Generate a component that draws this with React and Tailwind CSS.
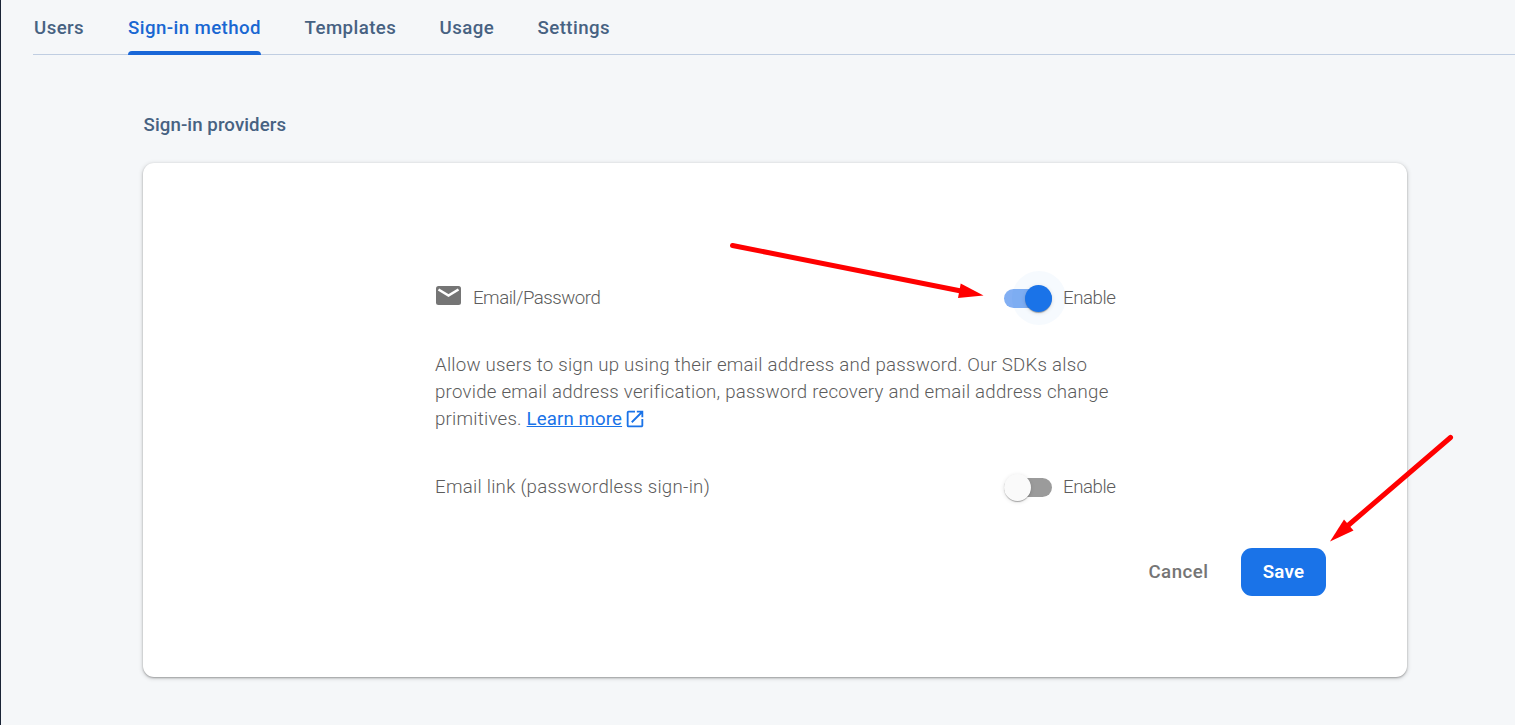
import React from "react";

const TABS = [
  { label: "Users", width: "w-[52px]", inset: "pl-px" },
  { label: "Sign-in method", width: "w-[133px]", active: true },
  { label: "Templates", width: "w-[92px]", inset: "pl-[0.6px]" },
  { label: "Usage", width: "w-[55px]", inset: "pl-[0.6px]" },
  { label: "Settings", width: "w-[73px]", inset: "pl-[0.6px]" },
];

function Tabs() {
  return (
    <nav className="ml-8 flex h-[55px] gap-[43px] border-b border-[#c0cee2]">
      {TABS.map((tab) => (
        <a
          key={tab.label}
          className={
            "relative flex h-[54px] items-center whitespace-nowrap pt-0.5 text-[18.67px] font-medium tracking-[0.42px] " +
            tab.width +
            (tab.active ? " text-[#1967d2]" : " text-[#476282] " + tab.inset)
          }
        >
          <span>{tab.label}</span>
          {tab.active && (
            <span className="absolute -bottom-px left-0 h-1 w-full rounded-t-[4px] bg-[#1967d8]" />
          )}
        </a>
      ))}
    </nav>
  );
}

function Toggle({ on }) {
  return (
    <div className="flex items-center pt-0.5">
      <div
        className={
          "relative h-[19px] w-12 rounded-full " + (on ? "bg-[#82aff3]" : "bg-[#9b9b9b]")
        }
      >
        {on && (
          <span className="absolute -top-[18px] left-[8px] size-[54px] rounded-full bg-[#1a73e8]/4" />
        )}
        <span
          className={
            "absolute -top-1 size-[27px] rounded-full shadow-[0_2px_1px_-1px_rgba(0,0,0,0.2),0_1px_1px_rgba(0,0,0,0.14),0_1px_4px_rgba(0,0,0,0.12)] " +
            (on ? "left-[21px] bg-[#1a73e8]" : "left-0 bg-[#fafafa]")
          }
        />
      </div>
      <span className="relative ml-[11px] w-[53px] text-[18.67px] leading-[27px] tracking-[-0.45px]">
        Enable
      </span>
    </div>
  );
}

function Arrows() {
  return (
    <svg
      className="pointer-events-none absolute top-0 -left-px"
      width="1515"
      height="725"
      viewBox="0 0 1515 725"
      fill="#ff0000"
      stroke="#ff0000"
    >
      <path d="M732.5 245.5L961 291" strokeWidth="5" strokeLinecap="round" />
      <path d="M983.5 295.5L960.7 283.5L958 298Z" stroke="none" />
      <path d="M1450.5 437.5L1348 525.5" strokeWidth="5" strokeLinecap="round" />
      <path d="M1330 541.5L1344 519.5L1353.5 530.5Z" stroke="none" />
    </svg>
  );
}

export default function App() {
  return (
    <div className="relative h-[725px] w-[1515px] overflow-hidden border-l border-[#1a2436] bg-[#f5f7f9] font-['Roboto',sans-serif]">
      <Tabs />
      <main className="ml-[142px] w-[1264px] pt-[57px]">
        <h2 className="h-[51px] pl-[0.6px] text-[18.67px] leading-[27px] font-medium tracking-[0.08px] text-[#476282]">
          Sign-in providers
        </h2>
        <section className="h-[514px] rounded-[11px] bg-white pt-[121px] text-[18.67px] font-light text-[#5c5c5c] shadow-[0_1px_2px_rgba(0,0,0,0.3),0_1px_4px_1px_rgba(0,0,0,0.12)]">
          <div className="ml-[292px] w-[681px]">
            <div className="flex h-[27px] items-center justify-between">
              <div className="flex items-center">
                <svg className="-mt-1.5 mr-[11px] h-8 w-[27px]" viewBox="0 0 27 32" fill="none">
                  <rect x="1" y="7" width="25" height="19" rx="2.5" fill="#757575" />
                  <path d="M3.5 10.5L13.5 16.5L23.5 10.5" stroke="white" strokeWidth="2.6" />
                </svg>
                <span className="tracking-[-0.5px]">Email/Password</span>
              </div>
              <Toggle on />
            </div>
            <p className="mt-[41px] whitespace-nowrap leading-[27px] tracking-[0.24px]">
              Allow users to sign up using their email address and password. Our SDKs also
              <br />
              provide email address verification, password recovery and email address change
              <br />
              primitives.{" "}
              <a className="text-[#1a73e8]">
                <span className="font-normal tracking-[0.11px] underline">Learn more</span>
                <svg
                  className="ml-0.5 inline-block size-[22px] align-[-5px]"
                  viewBox="0 0 24 24"
                  fill="currentColor"
                >
                  <path d="M19 19H5V5h7V3H5a2 2 0 0 0-2 2v14a2 2 0 0 0 2 2h14c1.1 0 2-.9 2-2v-7h-2v7zM14 3v2h3.59l-9.83 9.83 1.41 1.41L19 6.41V10h2V3h-7z" />
                </svg>
              </a>
            </p>
            <div className="mt-10 flex h-[27px] items-center justify-between">
              <span className="tracking-[0.27px]">Email link (passwordless sign-in)</span>
              <Toggle />
            </div>
          </div>
          <div className="mt-12 mr-[81px] flex justify-end font-medium">
            <button className="mr-[32.5px] h-12 tracking-[0.5px] text-[#757575]">Cancel</button>
            <button className="h-12 w-[85px] rounded-[11px] bg-[#1a73e8] font-semibold tracking-[0.3px] text-white">
              Save
            </button>
          </div>
        </section>
      </main>
      <Arrows />
    </div>
  );
}
